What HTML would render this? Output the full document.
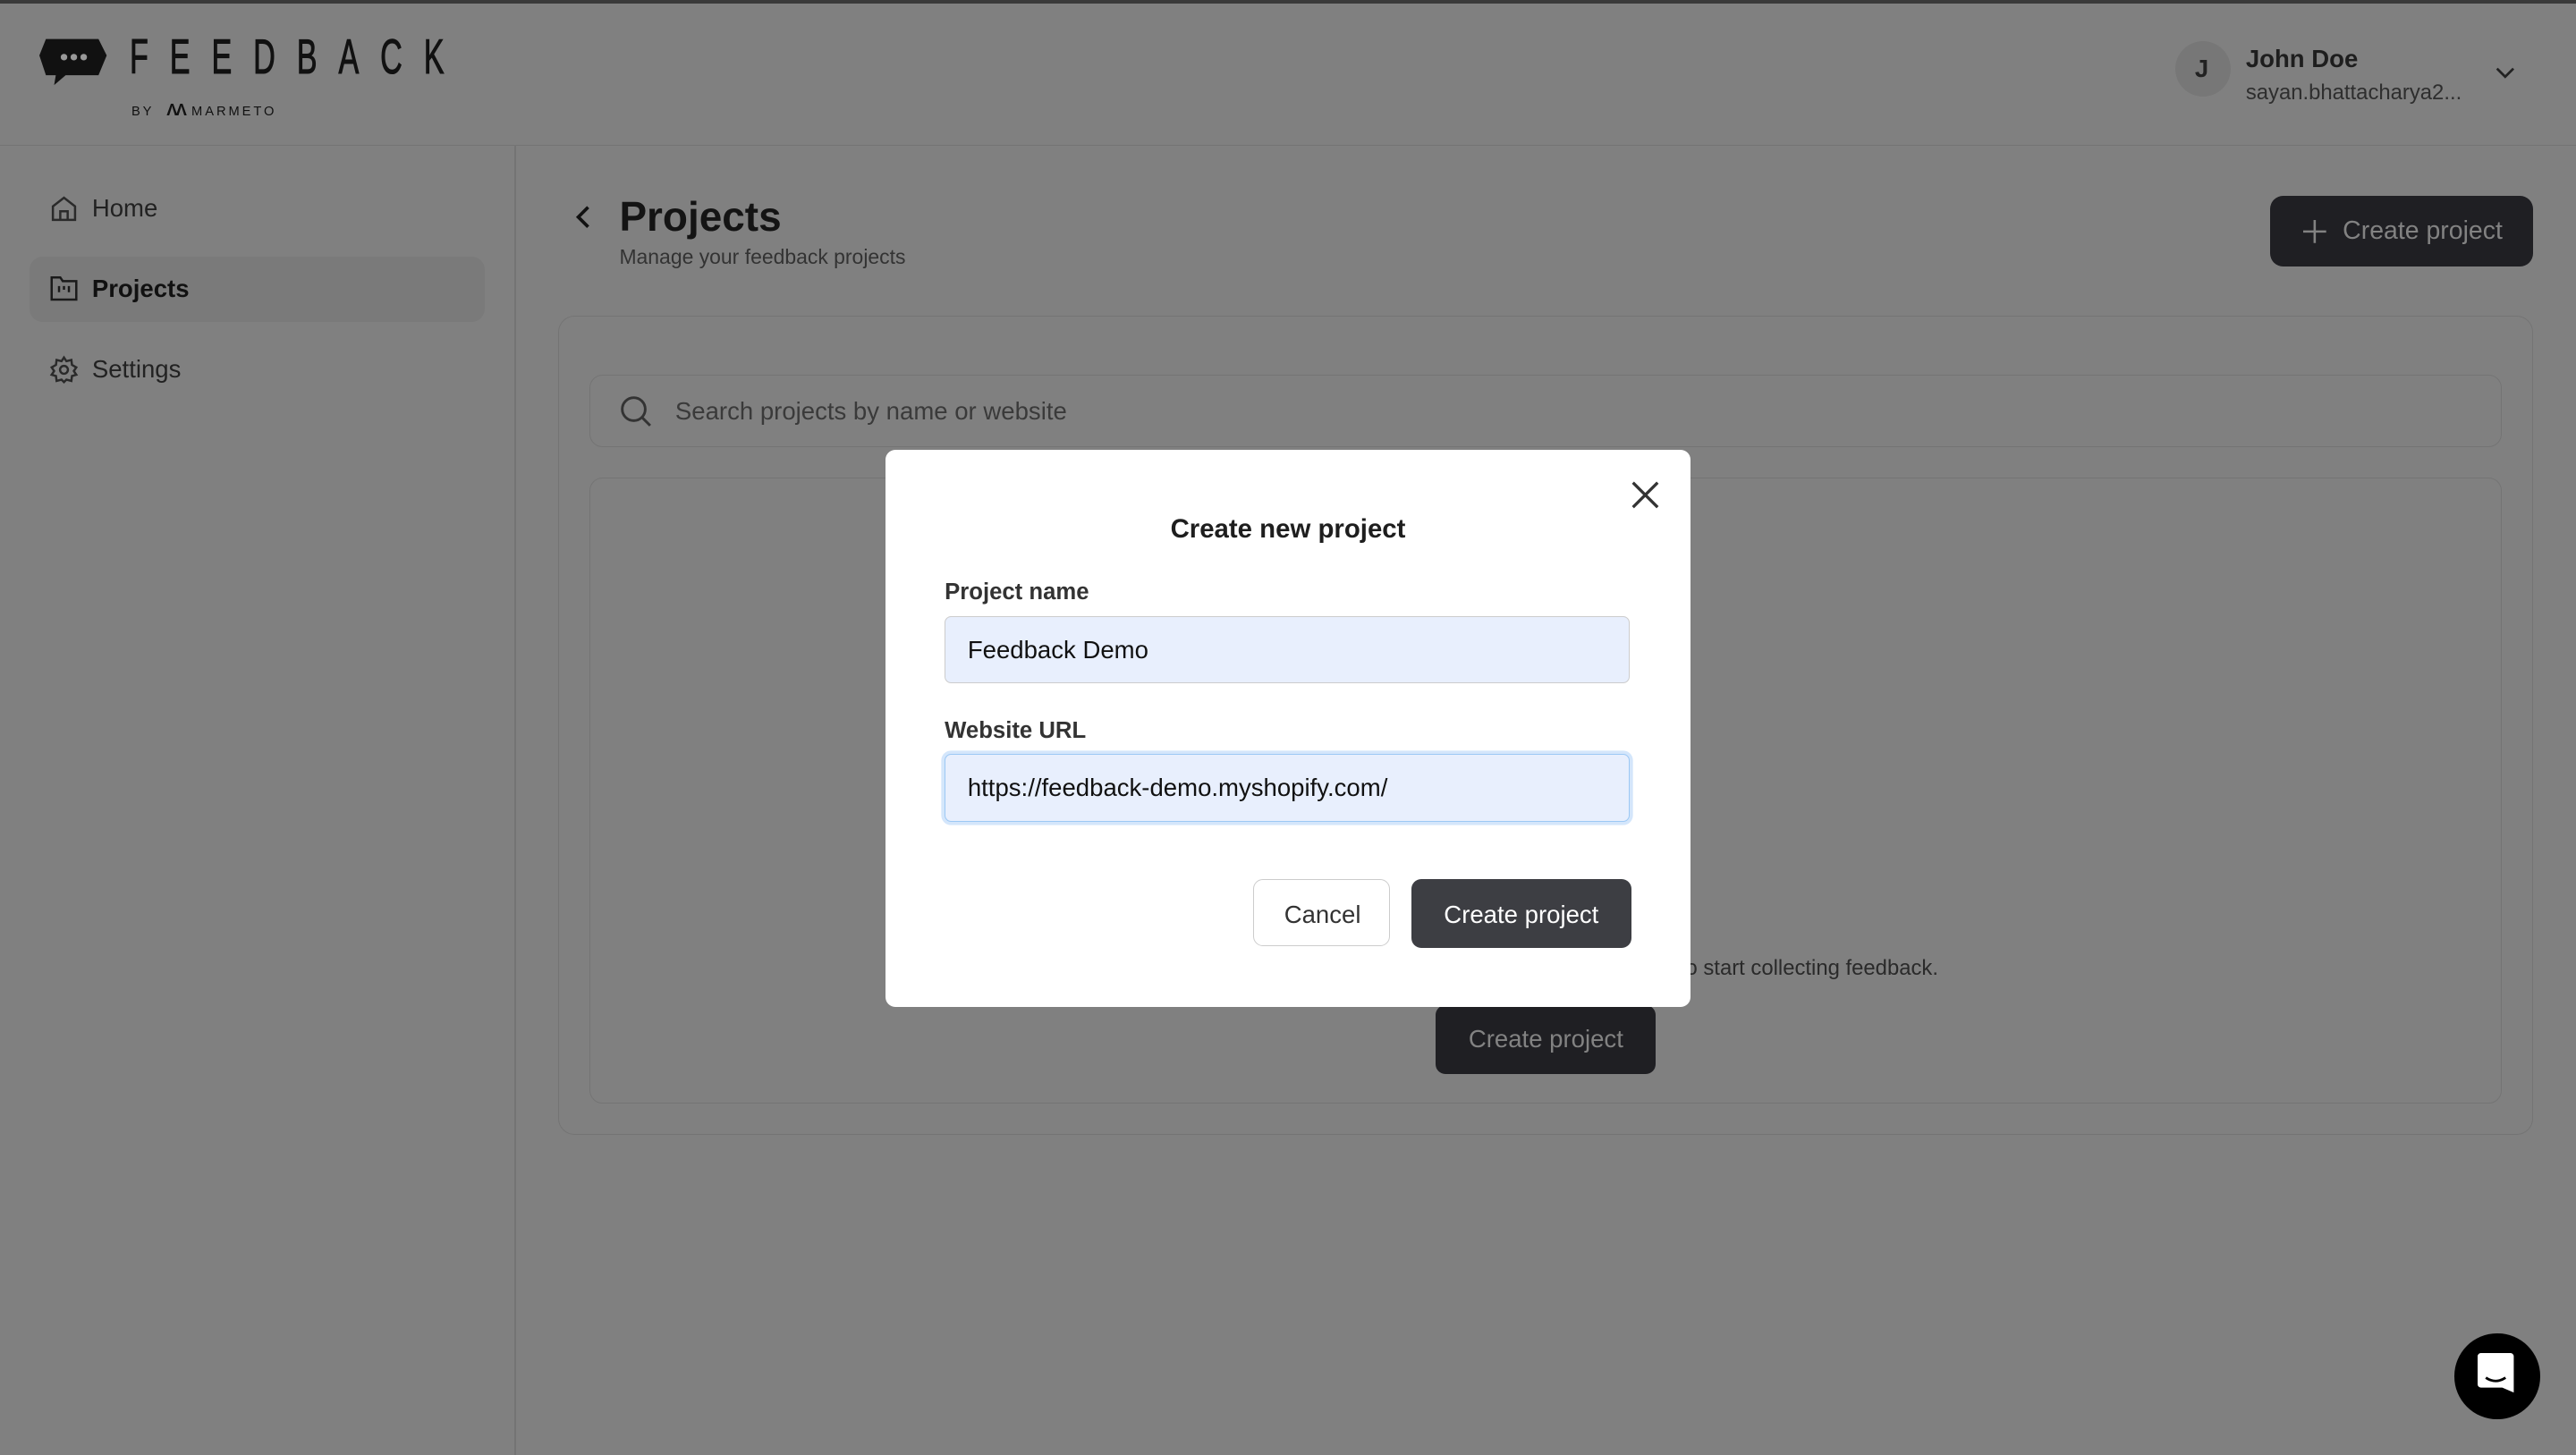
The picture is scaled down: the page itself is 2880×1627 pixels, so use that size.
<!DOCTYPE html>
<html><head><meta charset="utf-8"><style>
html,body{margin:0;padding:0;width:2880px;height:1627px;overflow:hidden;background:#808080}
#r{zoom:1.836735;position:relative;width:1568px;height:886px;font-family:"Liberation Sans",sans-serif;color:#1a1a1e}
.a{position:absolute}
.t{white-space:nowrap}
</style></head><body><div id="r">
<div class="a" style="left:0;top:0;width:1568px;height:2px;background:#3a3a3a"></div>
<div class="a" style="left:0;top:88px;width:1568px;height:1px;background:#747474"></div>
<div class="a" style="left:313px;top:89px;width:1px;height:797px;background:#747474"></div>
<!-- logo -->
<svg class="a" style="left:24px;top:22px" width="42" height="68" viewBox="0 0 42 68"><path d="M4 2H36L41 12L36 24H16L9 30L10 24H4L0 12Z" fill="#111"/><circle cx="15" cy="13" r="2" fill="#999"/><circle cx="21" cy="13" r="2" fill="#999"/><circle cx="27" cy="13" r="2" fill="#999"/></svg>
<div class="a t" style="left:79px;top:17px;font-size:30px;letter-spacing:21px;color:#111;transform:scaleX(0.62);transform-origin:left;-webkit-text-stroke:0.6px #111">FEEDBACK</div>
<div class="a t" style="left:80px;top:61px;font-size:8px;letter-spacing:1.6px;color:#111">BY &nbsp;<b style="font-size:10px;letter-spacing:-1px">ΛΛ</b>&nbsp;MARMETO</div>
<!-- sidebar -->
<svg class="a" style="left:30px;top:118px" width="18" height="18" viewBox="0 0 24 24" fill="none" stroke="#2a2a2a" stroke-width="1.8"><path d="M3 10L12 3L21 10V21H3Z M9 21V14H15V21"/></svg>
<div class="a t" style="left:56px;top:118px;font-size:15px;color:#222">Home</div>
<div class="a" style="left:18px;top:156px;width:277px;height:40px;border-radius:8px;background:#7a7a7a"></div>
<svg class="a" style="left:30px;top:167px" width="18" height="17" viewBox="0 0 24 22" fill="none" stroke="#1a1a1a" stroke-width="1.8"><path d="M2 2H9L11 5H22V20H2Z M8 9V14 M12 9V12 M16 9V14"/></svg>
<div class="a t" style="left:56px;top:167px;font-size:15px;font-weight:bold;color:#111">Projects</div>
<svg class="a" style="left:30px;top:216px" width="18" height="18" viewBox="0 0 24 24" fill="none" stroke="#2a2a2a" stroke-width="1.8"><circle cx="12" cy="12" r="3.2"/><path d="M12 2L14 5L18 4L18.5 8L22 10L20 13L22 16L18.5 17L18 21L14 20L12 22L10 20L6 21L5.5 17L2 16L4 13L2 10L5.5 8L6 4L10 5Z"/></svg>
<div class="a t" style="left:56px;top:216px;font-size:15px;color:#222">Settings</div>
<!-- user -->
<div class="a" style="left:1324px;top:25px;width:34px;height:34px;border-radius:50%;background:#777"></div>
<div class="a t" style="left:1336px;top:33px;font-size:15px;font-weight:bold;color:#222">J</div>
<div class="a t" style="left:1367px;top:27px;font-size:15px;font-weight:bold;color:#1e1e1e">John Doe</div>
<div class="a t" style="left:1367px;top:49px;font-size:13px;color:#2e2e2e">sayan.bhattacharya2...</div>
<svg class="a" style="left:1518px;top:40px" width="14" height="10" viewBox="0 0 14 10"><path d="M2 2L7 7L12 2" fill="none" stroke="#222" stroke-width="1.5"/></svg>
<!-- header -->
<svg class="a" style="left:349px;top:124px" width="12" height="16" viewBox="0 0 12 16"><path d="M9 2L3 8L9 14" fill="none" stroke="#111" stroke-width="2"/></svg>
<div class="a t" style="left:377px;top:117px;font-size:25px;font-weight:bold;color:#141414">Projects</div>
<div class="a t" style="left:377px;top:149px;font-size:12.5px;color:#333">Manage your feedback projects</div>
<div class="a" style="left:1382px;top:119px;width:160px;height:43px;border-radius:8px;background:#1f1f23"></div>
<svg class="a" style="left:1402px;top:134px" width="14" height="14" viewBox="0 0 14 14"><path d="M7 0V14M0 7H14" stroke="#828282" stroke-width="1.4"/></svg>
<div class="a t" style="left:1426px;top:132px;font-size:15.5px;color:#828282">Create project</div>
<!-- content card -->
<div class="a" style="left:340px;top:192px;width:1201px;height:498px;border:1px solid #747474;border-radius:10px"></div>
<div class="a" style="left:359px;top:228px;width:1163px;height:43px;border:1px solid #747474;border-radius:8px"></div>
<svg class="a" style="left:377px;top:240px" width="20" height="20" viewBox="0 0 20 20" fill="none" stroke="#333" stroke-width="1.6"><circle cx="9" cy="9" r="7"/><path d="M14 14L19 19"/></svg>
<div class="a t" style="left:411px;top:242px;font-size:15px;color:#3a3a3a">Search projects by name or website</div>
<div class="a" style="left:359px;top:291px;width:1163px;height:380px;border:1px solid #747474;border-radius:8px"></div>
<div class="a t" style="left:1026px;top:582px;font-size:13px;color:#2a2a2a">o start collecting feedback.</div>
<div class="a" style="left:874px;top:612px;width:134px;height:42px;border-radius:6px;background:#1f1f23"></div>
<div class="a t" style="left:874px;width:134px;text-align:center;top:624px;font-size:15px;color:#828282">Create project</div>
<!-- modal -->
<div class="a" style="left:539px;top:274px;width:490px;height:339px;border-radius:6px;background:#fff"></div>
<svg class="a" style="left:992px;top:292px" width="19" height="19" viewBox="0 0 19 19"><path d="M2 2L17 17M17 2L2 17" stroke="#333" stroke-width="1.8"/></svg>
<div class="a t" style="left:539px;width:490px;text-align:center;top:313px;font-size:16px;font-weight:bold;color:#1e1e1e">Create new project</div>
<div class="a t" style="left:575px;top:353px;font-size:14px;font-weight:bold;color:#333">Project name</div>
<div class="a" style="left:575px;top:375px;width:416px;height:40px;border:1px solid #ccc;border-radius:4px;background:#e8effd"></div>
<div class="a t" style="left:589px;top:387px;font-size:15px;color:#111">Feedback Demo</div>
<div class="a t" style="left:575px;top:437px;font-size:14px;font-weight:bold;color:#333">Website URL</div>
<div class="a" style="left:575px;top:459px;width:416px;height:40px;border:1px solid #9cc8f4;border-radius:4px;background:#e8effd;box-shadow:0 0 0 2px #d4e6fb"></div>
<div class="a t" style="left:589px;top:471px;font-size:15px;color:#111">https://feedback-demo.myshopify.com/</div>
<div class="a" style="left:763px;top:535px;width:82px;height:40px;border:1px solid #ccc;border-radius:6px;background:#fff"></div>
<div class="a t" style="left:763px;width:84px;text-align:center;top:548px;font-size:15px;color:#333">Cancel</div>
<div class="a" style="left:859px;top:535px;width:134px;height:42px;border-radius:6px;background:#3d3e43"></div>
<div class="a t" style="left:859px;width:134px;text-align:center;top:548px;font-size:15px;color:#fff">Create project</div>
<!-- chat -->
<div class="a" style="left:1494px;top:812px;width:52px;height:52px;border-radius:50%;background:#000"></div>
<svg class="a" style="left:1508px;top:824px" width="24" height="26" viewBox="0 0 24 26"><path d="M2 0H20A2 2 0 0 1 22 2V24L15 21H2A2 2 0 0 1 0 19V2A2 2 0 0 1 2 0Z" fill="#fff"/><path d="M5 15Q11 19 17 15" fill="none" stroke="#000" stroke-width="1.5"/></svg>
</div></body></html>
